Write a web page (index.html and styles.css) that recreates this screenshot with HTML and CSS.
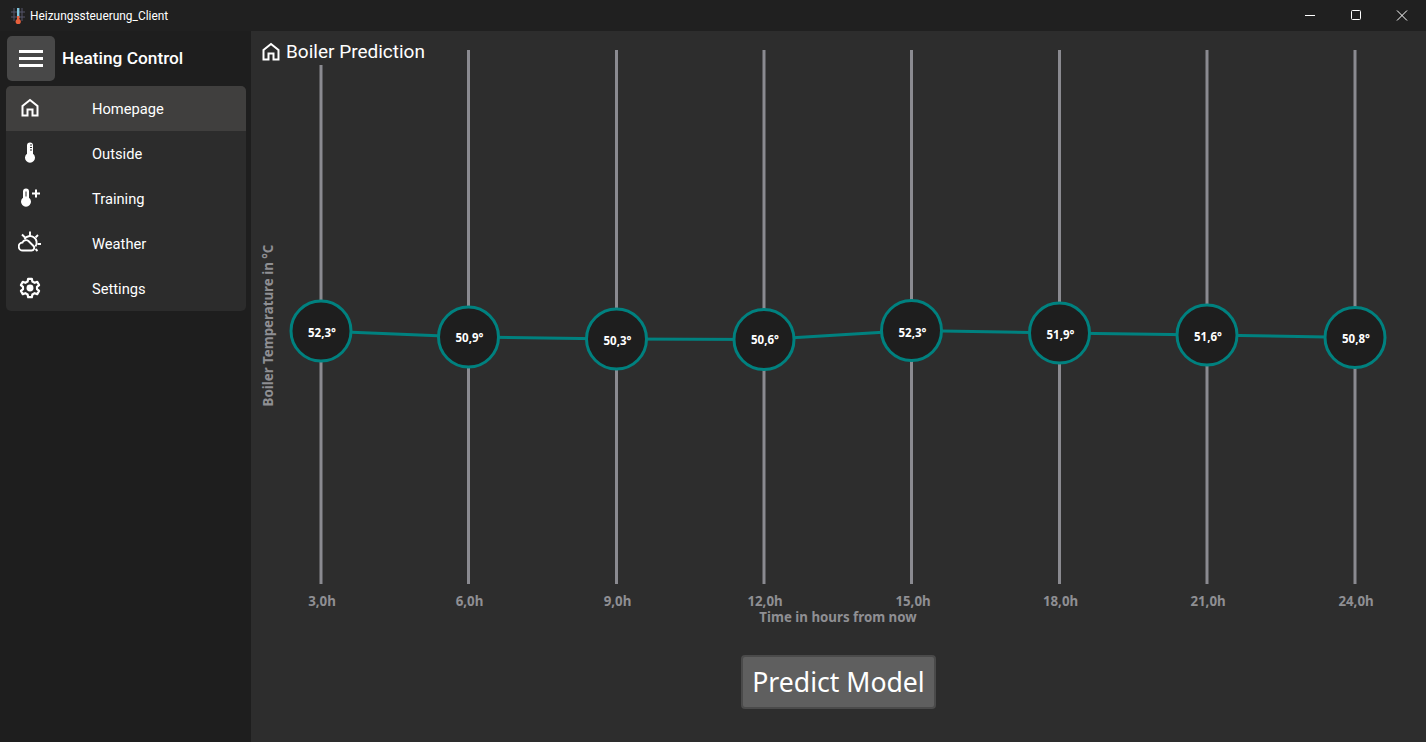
FILE: index.html
```html
<!DOCTYPE html>
<html lang="de">
<head>
    <meta charset="UTF-8">
    <meta name="viewport" content="width=device-width, initial-scale=1.0">
    <title>Heizungssteuerung_Client</title>
    <link rel="stylesheet" href="styles.css">
</head>
<body>
    <div class="window">
        <header class="titlebar">
            <svg class="app-icon" width="16" height="18" viewBox="0 0 16 18">
                <path d="M1 5h14M1 10h14M4 1v13M12 1v13" stroke="#55556a" stroke-width="1" fill="none"/>
                <rect x="7" y="1" width="2.4" height="10" fill="#7fc4dc"/>
                <rect x="7" y="9" width="2.4" height="5" fill="#e8603c"/>
                <circle cx="8.2" cy="14.5" r="2.6" fill="#e8603c"/>
            </svg>
            <span class="app-name">Heizungssteuerung_Client</span>
            <div class="win-buttons">
                <svg width="46" height="31" viewBox="0 0 46 31"><path d="M18 15.5h10" stroke="#fff" fill="none"/></svg>
                <svg width="46" height="31" viewBox="0 0 46 31"><rect x="18.5" y="10.5" width="9" height="9" rx="1" stroke="#fff" fill="none"/></svg>
                <svg width="46" height="31" viewBox="0 0 46 31"><path d="M18 10.5l10 10M28 10.5l-10 10" stroke="#fff" fill="none"/></svg>
            </div>
        </header>
        <div class="body">
            <aside class="sidebar">
                <div class="brand">
                    <button class="burger"><span></span><span></span><span></span></button>
                    <span class="brand-name">Heating Control</span>
                </div>
                <nav class="menu">
                    <a class="menu-item active">
                        <svg class="menu-icon" width="20" height="20" viewBox="0 0 20 20"><path d="M2.500 17.500V8L10 2l7.500 6v9.500h-5v-6h-5v6z" fill="none" stroke="#fff" stroke-width="2"/></svg>
                        <span>Homepage</span>
                    </a>
                    <a class="menu-item">
                        <svg class="menu-icon" width="20" height="24" viewBox="0 0 20 24"><path d="M7 12.700V4.500a3 3 0 0 1 6 0v8.200a5 5 0 1 1-6 0z" fill="#fff"/><path d="M10 4h2M10 6.500h2M10 9h2" stroke="#2d2d2d" stroke-width="1"/></svg>
                        <span>Outside</span>
                    </a>
                    <a class="menu-item">
                        <svg class="menu-icon" width="24" height="24" viewBox="0 0 24 24"><path d="M5 11.700V5.500a3 3 0 0 1 6 0v6.200a5 5 0 1 1-6 0z" fill="#fff"/><path d="M8 5.500v5" stroke="#2d2d2d" stroke-width="1"/><path d="M14 7.500h8M18 3.500v8" stroke="#fff" stroke-width="2"/></svg>
                        <span>Training</span>
                    </a>
                    <a class="menu-item">
                        <svg class="menu-icon" width="24" height="24" viewBox="0 0 24 24" fill="none" stroke="#fff" stroke-width="1.900"><path d="M5 19.500a4 4 0 0 1-.5-8c1-2.500 4-3 6-1.500l5 5c1.500 1.500.5 4.500-2 4.500z"/><path d="M6.500 8a6.500 6.500 0 0 1 11 7.500"/><path d="M12 .5v5M4 3.500l3 3M20 4l-2.500 2.500M19.500 13h3.500M17.500 18l2 2"/></svg>
                        <span>Weather</span>
                    </a>
                    <a class="menu-item">
                        <svg class="menu-icon" width="22" height="22" viewBox="0 0 24 24"><path d="M10 2h4l.6 3 2.400 1.300 2.900-1 2 3.500-2.300 2 .1 2.400 2.200 2-2 3.500-2.900-1-2.400 1.300L14 22h-4l-.6-3-2.400-1.300-2.900 1-2-3.500 2.300-2-.1-2.400-2.200-2 2-3.500 2.900 1L9.400 5z" fill="none" stroke="#fff" stroke-width="2.400" stroke-linejoin="round"/><circle cx="12" cy="12" r="3.800" fill="#fff"/></svg>
                        <span>Settings</span>
                    </a>
                </nav>
            </aside>
            <main class="content">
                <h1 class="page-title">
                    <svg width="20" height="20" viewBox="0 0 20 20"><path d="M2.500 17.500V8L10 2l7.500 6v9.500h-5v-6h-5v6z" fill="none" stroke="#fff" stroke-width="2"/></svg>
                    Boiler Prediction
                </h1>
                <svg class="chart" width="1175" height="600" viewBox="251 31 1175 600">
                    <g class="stems">
                        <line x1="321" y1="65" x2="321" y2="584"/>
                        <line x1="468.500" y1="50" x2="468.500" y2="584"/>
                        <line x1="616.500" y1="50" x2="616.500" y2="584"/>
                        <line x1="764" y1="50" x2="764" y2="584"/>
                        <line x1="911.500" y1="50" x2="911.500" y2="584"/>
                        <line x1="1059.500" y1="50" x2="1059.500" y2="584"/>
                        <line x1="1207" y1="50" x2="1207" y2="584"/>
                        <line x1="1355" y1="50" x2="1355" y2="584"/>
                    </g>
                    <polyline class="trend" points="321,331 468.500,337 616.500,339 764,339.500 911.500,330.500 1059.500,333 1207,335 1355,337.500"/>
                    <g class="dots">
                        <circle cx="321" cy="331" r="30"/>
                        <circle cx="468.500" cy="337" r="30"/>
                        <circle cx="616.500" cy="339" r="30"/>
                        <circle cx="764" cy="339.500" r="30"/>
                        <circle cx="911.500" cy="330.500" r="30"/>
                        <circle cx="1059.500" cy="333" r="30"/>
                        <circle cx="1207" cy="335" r="30"/>
                        <circle cx="1355" cy="337.500" r="30"/>
                    </g>
                    <g class="values">
                        <text x="322" y="337">52,3°</text>
                        <text x="469.500" y="342">50,9°</text>
                        <text x="617.500" y="345">50,3°</text>
                        <text x="765" y="344">50,6°</text>
                        <text x="912.500" y="337">52,3°</text>
                        <text x="1060.500" y="339">51,9°</text>
                        <text x="1208" y="341">51,6°</text>
                        <text x="1356" y="343">50,8°</text>
                    </g>
                    <g class="ticks">
                        <text x="322" y="606">3,0h</text>
                        <text x="469.500" y="606">6,0h</text>
                        <text x="617.500" y="606">9,0h</text>
                        <text x="765" y="606">12,0h</text>
                        <text x="913" y="606">15,0h</text>
                        <text x="1060.500" y="606">18,0h</text>
                        <text x="1208" y="606">21,0h</text>
                        <text x="1356" y="606">24,0h</text>
                    </g>
                    <text class="axis" x="838" y="622">Time in hours from now</text>
                    <text class="axis" transform="translate(273 325.500) rotate(-90)">Boiler Temperature in °C</text>
                </svg>
                <div class="actions">
                    <button class="predict">Predict Model</button>
                </div>
            </main>
        </div>
    </div>
</body>
</html>
```

FILE: styles.css
```css
html, body {
    margin: 0;
    padding: 0;
    height: 100%;
    background-color: #1e1e1e;
}

.window {
    display: flex;
    flex-direction: column;
    height: 742px;
    overflow: hidden;
    color: #fff;
    font-family: Roboto, sans-serif;
}

.titlebar {
    display: flex;
    align-items: center;
    flex: 0 0 31px;
    background-color: #202020;
    font-size: 11.900px;
}

.app-icon {
    margin-left: 10px;
    margin-right: 4px;
}

.win-buttons {
    display: flex;
    margin-left: auto;
    margin-right: 1px;
}

.body {
    display: flex;
    flex: 1;
}

.sidebar {
    flex: 0 0 251px;
    background-color: #1e1e1e;
}

.brand {
    display: flex;
    align-items: center;
    gap: 7px;
    padding: 5px 7px;
}

.burger {
    display: flex;
    flex-direction: column;
    justify-content: center;
    gap: 4px;
    width: 48px;
    height: 45px;
    padding: 0 12px;
    background-color: #484848;
    border: none;
    border-radius: 5px;
}

.burger span {
    display: block;
    height: 3px;
    background-color: #fff;
}

.brand-name {
    padding-bottom: 2px;
    font-size: 17.300px;
    font-weight: 500;
}

.menu {
    width: 240px;
    margin-left: 6px;
    background-color: #2c2c2c;
    border-radius: 5px;
    overflow: hidden;
}

.menu-item {
    position: relative;
    display: flex;
    align-items: center;
    height: 45px;
    padding-left: 86px;
    font-size: 14.700px;
}

.menu-item.active {
    background-color: #403f3e;
}

.menu-icon {
    position: absolute;
    left: 24px;
    top: 50%;
    transform: translate(-50%, -50%);
    margin-top: -1px;
}

.content {
    position: relative;
    flex: 1;
    background-color: #2d2d2d;
}

.page-title {
    display: flex;
    align-items: center;
    gap: 5px;
    position: absolute;
    z-index: 1;
    left: 10px;
    top: 9px;
    margin: 0;
    font-size: 19px;
    font-weight: 400;
}

.chart {
    display: block;
}

.stems line {
    stroke: #8a8a90;
    stroke-width: 3;
}

.trend {
    fill: none;
    stroke: #00817f;
    stroke-width: 3;
}

.dots circle {
    fill: #1e1e1e;
    stroke: #00817f;
    stroke-width: 3;
}

.values text {
    fill: #fff;
    font-family: "Noto Sans", sans-serif;
    font-size: 11.500px;
    font-weight: 700;
    text-anchor: middle;
}

.ticks text, .axis {
    fill: #8f8f93;
    font-family: "Noto Sans", sans-serif;
    font-size: 13.300px;
    font-weight: 700;
    text-anchor: middle;
}

.actions {
    display: flex;
    justify-content: center;
    padding-top: 24px;
}

.predict {
    height: 54px;
    padding: 0 9px;
    background-color: #5f5f5f;
    border: 2px solid #4a4a4a;
    border-radius: 4px;
    color: #fff;
    font-family: "Noto Sans", sans-serif;
    font-size: 26.600px;
}
```
